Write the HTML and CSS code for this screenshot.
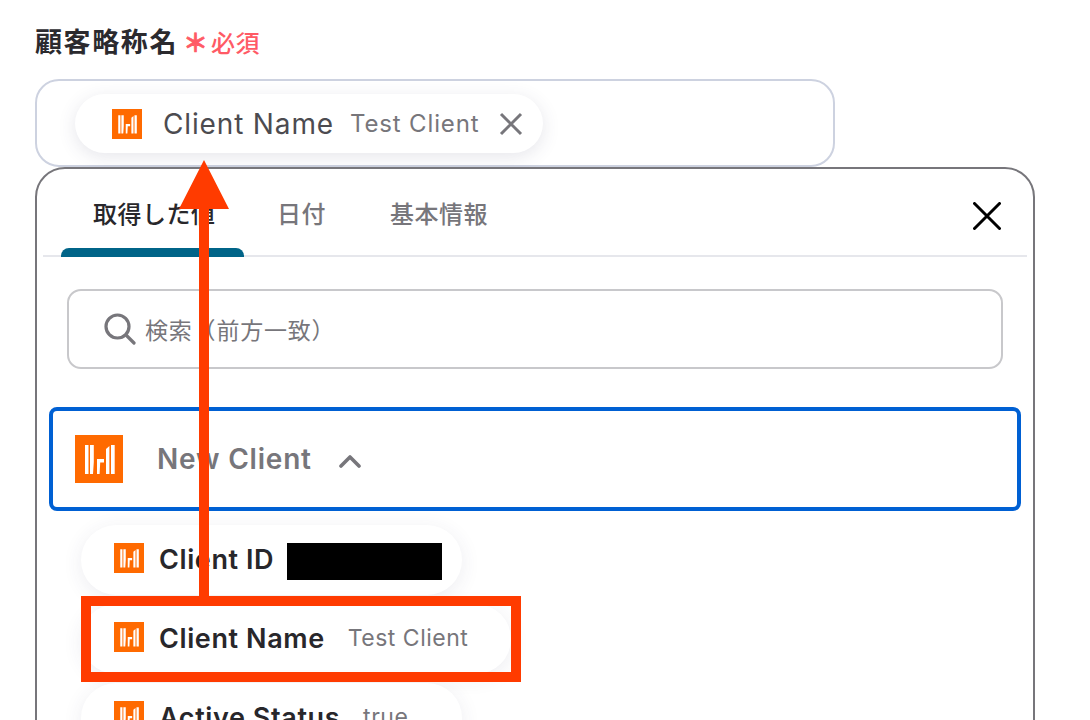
FILE: index.html
```html
<!DOCTYPE html>
<html lang="ja">
<head>
<meta charset="utf-8">
<title>顧客略称名</title>
<link rel="stylesheet" href="styles.css">
</head>
<body>
<svg class="defs" width="0" height="0" aria-hidden="true">
  <symbol id="logo" viewBox="0 0 48 48">
    <rect width="48" height="48" fill="#ff6a00"/>
    <path fill="#fff" d="M10 10h3.5v29H10zM15 10h3.8v17l-.8 12h-3zM22 39V24h7v3.5h-3.8L24.6 39zM31 14l3.4-3V39H31zM36 10h3.7v29H36z"/>
  </symbol>
</svg>
<main class="page">
  <div class="label"><span class="label-text">顧客略称名</span><span class="req-star">＊</span><span class="req-text">必須</span></div>
  <div class="field">
    <div class="chip">
      <svg class="logo-s"><use href="#logo"/></svg>
      <span class="chip-name">Client Name</span>
      <span class="chip-value">Test Client</span>
      <svg class="chip-x" viewBox="0 0 24 24"><path d="M2 2l20 20M22 2L2 22"/></svg>
    </div>
  </div>
  <section class="panel">
    <div class="tabs">
      <div class="tab active">取得した値</div>
      <div class="tab second">日付</div>
      <div class="tab third">基本情報</div>
      <svg class="close" viewBox="0 0 28 28"><path d="M1.5 1.5l25 25M26.5 1.5l-25 25"/></svg>
    </div>
    <div class="search">
      <svg class="search-icon" viewBox="0 0 32 32"><circle cx="13.5" cy="13.5" r="11.5"/><path d="M22 22l8 8"/></svg>
      <span class="search-text">検索（前方一致）</span>
    </div>
    <div class="group">
      <svg class="logo-l"><use href="#logo"/></svg>
      <span class="group-name">New Client</span>
      <svg class="chevron" viewBox="0 0 22 14"><path d="M2 12l9-9 9 9"/></svg>
    </div>
    <ul class="items">
      <li class="item">
        <svg class="logo-s"><use href="#logo"/></svg>
        <span class="item-name">Client ID</span>
        <span class="redact"></span>
      </li>
      <li class="item item-wide">
        <svg class="logo-s"><use href="#logo"/></svg>
        <span class="item-name">Client Name</span>
        <span class="item-value">Test Client</span>
      </li>
      <li class="item">
        <svg class="logo-s"><use href="#logo"/></svg>
        <span class="item-name">Active Status</span>
        <span class="item-value">true</span>
      </li>
    </ul>
  </section>
</main>
<div class="mark-box"></div>
<svg class="mark-arrow" viewBox="0 0 50 440"><path d="M25 0L50 49H30V437H20V49H0z"/></svg>
</body>
</html>
```
FILE: styles.css
```css
* { box-sizing: border-box; }
html, body { margin: 0; height: 720px; overflow: hidden; background: #fff; }
body { position: relative; font-family: Inter, "Noto Sans CJK JP", sans-serif; color: #28272b; }
.defs { position: absolute; }
.page { width: 1000px; margin-left: 35px; padding-top: 20px; }

.label { display: flex; align-items: center; height: 40px; margin-bottom: 19px; }
.label-text { font-size: 27px; font-weight: 700; letter-spacing: 1.6px; color: #2b2a2e; }
.req-star { font-size: 25px; font-weight: 700; color: #ff5a65; margin: 7px 0 0 5px; width: 28px; line-height: 1; -webkit-text-stroke: .7px #ff5a65; }
.req-text { font-size: 24px; font-weight: 500; color: #ff5a65; letter-spacing: .6px; margin-top: 2px; }

.field { width: 800px; height: 88px; border: 2px solid #cdd2e0; border-radius: 24px; padding: 13px 0 0 38px; }
.chip { display: flex; align-items: center; width: 468px; height: 59px; border-radius: 30px; background: #fff; padding-left: 37px; box-shadow: 0 4px 18px rgba(60, 60, 100, .13); }
.logo-s { width: 30px; height: 30px; flex: none; }
.logo-l { width: 48px; height: 48px; flex: none; }
.chip-name { font-size: 28px; color: #4c4b50; margin-left: 21px; letter-spacing: .85px; }
.chip-value { font-size: 24px; color: #77767b; margin-left: 16px; letter-spacing: .85px; }
.chip-x { width: 24px; height: 24px; margin-left: 20px; fill: none; stroke: #77767b; stroke-width: 3; }

.panel { width: 1000px; height: 640px; border: 2px solid #77767b; border-radius: 30px; padding: 0 6px; background: #fff; }
.tabs { position: relative; display: flex; height: 88px; border-bottom: 2px solid #e6e7ec; }
.tab { position: relative; font-size: 24px; font-weight: 500; color: #77767b; padding-top: 28px; line-height: 36px; letter-spacing: .5px; }
.tab.active { width: 183px; margin-left: 18px; padding-left: 32px; color: #28272b; }
.tab.active::after { content: ""; position: absolute; left: 0; right: 0; bottom: -2px; height: 9px; background: #006488; border-radius: 8px 8px 0 0; }
.tab.second { margin-left: 33px; }
.tab.third { margin-left: 64px; }
.close { position: absolute; right: 26px; top: 33px; width: 28px; height: 28px; fill: none; stroke: #000; stroke-width: 3; stroke-linecap: round; }

.search { display: flex; align-items: center; width: 936px; height: 80px; margin: 32px 0 0 24px; border: 2px solid #c8c8cb; border-radius: 14px; padding-left: 35px; }
.search-icon { width: 32px; height: 32px; fill: none; stroke: #77767b; stroke-width: 3.2; stroke-linecap: round; }
.search-text { font-size: 23px; color: #77767b; margin-left: 9px; letter-spacing: .8px; }

.group { display: flex; align-items: center; width: 972px; height: 104px; margin: 38px 0 0 6px; border: 4px solid #0060d3; border-radius: 8px; padding-left: 22px; }
.group-name { font-size: 28px; font-weight: 600; color: #77767b; margin-left: 34px; letter-spacing: .8px; }
.chevron { width: 22px; height: 14px; margin: 4px 0 0 27px; fill: none; stroke: #77767b; stroke-width: 3.6; stroke-linecap: round; stroke-linejoin: round; }

.items { list-style: none; margin: 14px 0 0 38px; padding: 0; display: flex; flex-direction: column; gap: 9px; }
.item { display: flex; align-items: center; width: 381px; height: 70px; flex: none; border-radius: 35px; padding: 0 0 4px 33px; background: #fff; box-shadow: 0 4px 20px rgba(60, 60, 100, .09); }
.item-wide { width: 430px; }
.item-name { font-size: 27px; font-weight: 600; margin: 2px 0 0 15px; letter-spacing: .6px; }
.item-value { font-size: 23px; color: #77767b; margin: 2px 0 0 23px; letter-spacing: .5px; }
.redact { width: 155px; height: 37px; background: #000; margin: 6px 0 0 13px; }

.mark-box { position: absolute; left: 81px; top: 596px; width: 440px; height: 86px; border: 10px solid #ff3b00; }
.mark-arrow { position: absolute; left: 179px; top: 160px; width: 50px; height: 440px; fill: #ff3b00; }
```
